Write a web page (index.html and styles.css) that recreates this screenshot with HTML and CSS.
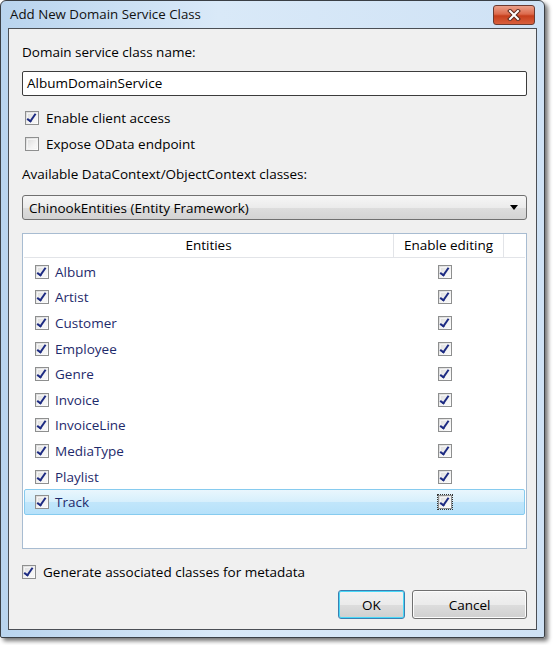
FILE: index.html
```html
<!DOCTYPE html>
<html>
<head>
<meta charset="utf-8">
<link rel="stylesheet" href="styles.css">
</head>
<body>
<div class="window">
  <div class="titlebar">
    <span class="title">Add New Domain Service Class</span>
    <div class="close">
      <svg width="14" height="12" viewBox="0 0 14 12"><path d="M3 2 L11 10 M11 2 L3 10" stroke="#5a2a20" stroke-width="4" stroke-linecap="square"/><path d="M3 2 L11 10 M11 2 L3 10" stroke="#fff" stroke-width="2" stroke-linecap="square"/></svg>
    </div>
  </div>
  <div class="panel">
    <div class="label first">Domain service class name:</div>
    <div class="textbox">AlbumDomainService</div>
    <div class="check-row r1"><span class="cb checked"></span><span>Enable client access</span></div>
    <div class="check-row r2"><span class="cb"></span><span>Expose OData endpoint</span></div>
    <div class="label second">Available DataContext/ObjectContext classes:</div>
    <div class="combo"><span>ChinookEntities (Entity Framework)</span><span class="arrow"></span></div>
    <div class="grid">
      <div class="ghead">
        <div class="hc-ent">Entities</div>
        <div class="hc-edit">Enable editing</div>
        <div class="hc-rest"></div>
      </div>
      <div class="rows">
        <div class="row"><div class="c-ent"><span class="cb checked"></span><span class="nm">Album</span></div><div class="c-edit"><span class="cb checked"></span></div></div>
        <div class="row"><div class="c-ent"><span class="cb checked"></span><span class="nm">Artist</span></div><div class="c-edit"><span class="cb checked"></span></div></div>
        <div class="row"><div class="c-ent"><span class="cb checked"></span><span class="nm">Customer</span></div><div class="c-edit"><span class="cb checked"></span></div></div>
        <div class="row"><div class="c-ent"><span class="cb checked"></span><span class="nm">Employee</span></div><div class="c-edit"><span class="cb checked"></span></div></div>
        <div class="row"><div class="c-ent"><span class="cb checked"></span><span class="nm">Genre</span></div><div class="c-edit"><span class="cb checked"></span></div></div>
        <div class="row"><div class="c-ent"><span class="cb checked"></span><span class="nm">Invoice</span></div><div class="c-edit"><span class="cb checked"></span></div></div>
        <div class="row"><div class="c-ent"><span class="cb checked"></span><span class="nm">InvoiceLine</span></div><div class="c-edit"><span class="cb checked"></span></div></div>
        <div class="row"><div class="c-ent"><span class="cb checked"></span><span class="nm">MediaType</span></div><div class="c-edit"><span class="cb checked"></span></div></div>
        <div class="row"><div class="c-ent"><span class="cb checked"></span><span class="nm">Playlist</span></div><div class="c-edit"><span class="cb checked"></span></div></div>
        <div class="row selected"><div class="c-ent"><span class="cb checked"></span><span class="nm">Track</span></div><div class="c-edit"><span class="cb checked focus"></span></div></div>
      </div>
    </div>
    <div class="check-row r3"><span class="cb checked"></span><span>Generate associated classes for metadata</span></div>
    <div class="buttons">
      <div class="btn ok">OK</div>
      <div class="btn cancel">Cancel</div>
    </div>
  </div>
</div>
</body>
</html>
```
FILE: styles.css
```css
html, body {
  margin: 0;
  padding: 0;
  background: #ffffff;
}
body {
  font-family: "Open Sans", "Noto Sans", sans-serif;
  font-size: 13.5px;
  color: #000;
  width: 553px;
  height: 645px;
  overflow: hidden;
}
.window {
  width: 543px;
  height: 636px;
  border: 1px solid #3a3f45;
  border-radius: 6px 6px 2px 2px;
  background: linear-gradient(to right, #b9d4ee 0%, #d9e9f8 40%, #cfe2f5 100%);
  box-shadow: 3px 3px 4px rgba(0,0,0,0.55);
  display: flex;
  flex-direction: column;
  box-sizing: content-box;
}
.titlebar {
  height: 27px;
  display: flex;
  align-items: flex-start;
  justify-content: space-between;
  padding: 0 9px 0 9px;
}
.title {
  margin-top: 4px;
  font-size: 13.3px;
  line-height: 18px;
  color: #111;
}
.close {
  margin-top: 4px;
  width: 42px;
  height: 20px;
  border: 1px solid #6b3a30;
  border-radius: 3px;
  background: linear-gradient(#eba08a 0%, #dc6a4c 45%, #c63e1c 55%, #d9603d 100%);
  display: flex;
  align-items: center;
  justify-content: center;
  box-sizing: border-box;
}
.panel {
  flex: 1;
  margin: 0 7px 7px 7px;
  border: 1px solid #4b4f55;
  background: #f0f0f0;
  padding: 0 9px 0 13px;
  display: flex;
  flex-direction: column;
}
.label {
  height: 16px;
  line-height: 16px;
}
.label.first { margin-top: 15px; }
.textbox {
  margin-top: 11px;
  height: 25px;
  border: 1px solid #3c3c3c;
  background: #fff;
  box-sizing: border-box;
  line-height: 23px;
  padding-left: 4px;
  border-radius: 2px;
}
.check-row {
  display: flex;
  align-items: center;
  height: 16px;
  line-height: 16px;
  gap: 7px;
}
.check-row.r1 { margin-top: 14px; padding-left: 3px; }
.check-row.r2 { margin-top: 10px; padding-left: 3px; }
.check-row.r3 { margin-top: 15px; padding-left: 0; }
.label.second { margin-top: 14px; }
.combo {
  margin-top: 13px;
  height: 25px;
  border: 1px solid #707070;
  border-radius: 3px;
  background: linear-gradient(#f6f6f6 0%, #ebebeb 50%, #dddddd 51%, #d3d3d3 100%);
  box-sizing: border-box;
  display: flex;
  align-items: center;
  justify-content: space-between;
  padding: 0 8px 0 6px;
}
.arrow {
  width: 0;
  height: 0;
  border-left: 4px solid transparent;
  border-right: 4px solid transparent;
  border-top: 5px solid #000;
}
.grid {
  margin-top: 13px;
  height: 316px;
  border: 1px solid #a8bcd1;
  background: #fff;
  box-sizing: border-box;
  display: flex;
  flex-direction: column;
}
.ghead {
  display: flex;
  height: 23px;
  border-bottom: 1px solid #e2e4e8;
  line-height: 23px;
  margin: 0 1px;
}
.hc-ent {
  width: 370px;
  text-align: center;
  border-right: 1px solid #e2e4e8;
  box-sizing: border-box;
}
.hc-edit {
  width: 110px;
  text-align: center;
  border-right: 1px solid #e2e4e8;
  box-sizing: border-box;
}
.hc-rest { flex: 1; }
.rows {
  display: flex;
  flex-direction: column;
  padding-top: 1px;
}
.row {
  display: flex;
  height: 25.6px;
  align-items: center;
  margin: 0 1px;
  border: 1px solid transparent;
  border-radius: 2px;
  box-sizing: border-box;
}
.row.selected {
  border-color: #86cbef;
  background: linear-gradient(#e9f6fd 0%, #d6effc 50%, #c1e6fb 51%, #b6e1fa 100%);
}
.c-ent {
  width: 369px;
  display: flex;
  align-items: center;
  gap: 6px;
  padding-left: 10px;
  box-sizing: border-box;
}
.nm { color: #1e2a6b; }
.c-edit {
  width: 110px;
  display: flex;
  justify-content: center;
  padding-right: 8px;
  box-sizing: border-box;
}
.cb {
  display: inline-block;
  width: 14px;
  height: 14px;
  border: 1px solid #8e8f8f;
  box-sizing: border-box;
  background: linear-gradient(135deg, #d9d9d9 0%, #f2f2f2 60%, #ffffff 100%);
  position: relative;
  flex: none;
}
.cb::before {
  content: "";
  position: absolute;
  inset: 1px;
  border: 1px solid #f4f4f4;
}
.cb.checked::after {
  content: "";
  position: absolute;
  left: 3px;
  top: 0px;
  width: 3px;
  height: 8px;
  border-right: 2px solid #1c2a82;
  border-bottom: 2px solid #1c2a82;
  transform: rotate(35deg);
}
.cb.focus {
  outline: 1px dotted #333;
  outline-offset: 0px;
}
.buttons {
  display: flex;
  justify-content: flex-end;
  gap: 7px;
  margin-top: 10px;
}
.btn {
  height: 29px;
  border: 1px solid #707070;
  border-radius: 3px;
  box-sizing: border-box;
  background: linear-gradient(#f2f2f2 0%, #ebebeb 50%, #dddddd 51%, #cfcfcf 100%);
  display: flex;
  align-items: center;
  justify-content: center;
  box-shadow: inset 0 0 0 1px #fcfcfc;
}
.btn.ok {
  width: 67px;
  border-color: #3c7fb1;
  box-shadow: inset 0 0 0 1px #48d8f8;
}
.btn.cancel { width: 115px; }
```
